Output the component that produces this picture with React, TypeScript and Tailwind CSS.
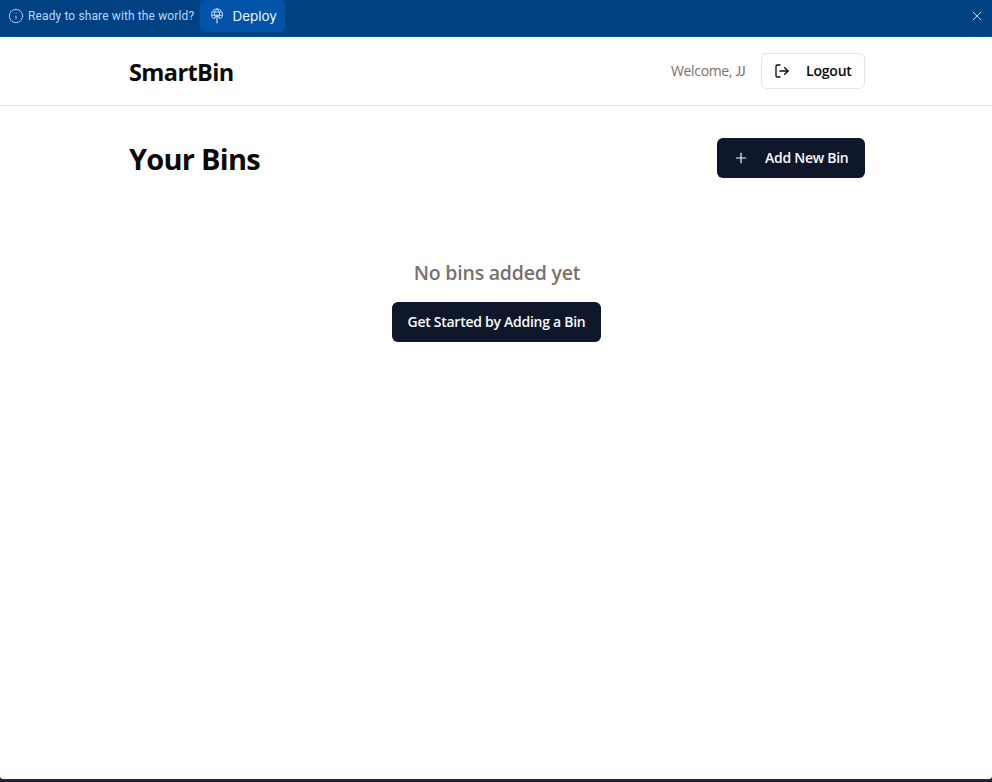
import { Info, LogOut, Plus, X } from "lucide-react";

function DeployIcon() {
  return (
    <svg width="16" height="16" viewBox="0 0 16 16" fill="none" stroke="#c2dcf5" strokeWidth="1" strokeLinecap="round" strokeLinejoin="round">
      <path d="M4.2 10.6A5.6 5.6 0 1 1 11.8 10.6" />
      <path d="M2.5 7.2h11M8 1.2C5.8 2.8 5 5.2 5.5 8M8 1.2C10.2 2.8 11 5.2 10.5 8M3.4 4h9.2" />
      <path d="M8 15V7.6M5 10.4l3-3 3 3" strokeWidth="1.2" />
    </svg>
  );
}

function Banner() {
  return (
    <div className="flex h-[37px] items-start justify-between border-b border-[#0053a6] bg-[#004182]">
      <div className="flex h-8 items-center pl-2">
        <Info size={16} strokeWidth={1.5} className="text-[#a5d0f8]" />
        <span className="ml-1 w-[172px] whitespace-nowrap font-['Roboto',sans-serif] text-[12px] tracking-[0.12px] text-[#b3d9ff]">
          Ready to share with the world?
        </span>
        <button className="flex h-8 w-[85px] items-center rounded bg-[#0053a6] pl-[9px] font-['Inter',sans-serif] text-[13.5px] text-[#f0f6fc]">
          <DeployIcon />
          <span className="ml-[7.5px] tracking-[-0.05px]">Deploy</span>
        </button>
      </div>
      <button className="flex h-8 items-center pr-[7px] text-[#b3d9ff]">
        <X size={16} strokeWidth={1.5} />
      </button>
    </div>
  );
}

export default function App() {
  return (
    <div className="flex h-[782px] flex-col bg-[#23283b] font-['Open_Sans','Noto_Sans',sans-serif] text-[#0c0a09]">
      <Banner />
      <div className="flex-1 rounded-b-[3px] bg-white">
        <header className="h-[69px] border-b border-[#e4e4e7]">
          <div className="mx-auto flex h-[68px] w-[738px] items-center justify-between pl-0.5">
            <h1 className="pt-0.5 text-[23.5px] leading-8 font-bold tracking-[-0.6px]">SmartBin</h1>
            <div className="flex items-center gap-4">
              <span className="whitespace-nowrap text-[14px] leading-5 tracking-[-0.35px] text-[#78716c]">
                Welcome, <span className="font-['Lato',sans-serif] text-[13.5px] tracking-[-0.8px]">JJ</span>
              </span>
              <button className="flex h-9 w-[104px] items-center rounded-md border border-[#e4e4e7] pl-3 text-[14px] font-semibold tracking-[-0.2px]">
                <LogOut size={16} className="mr-4" />
                <span className="-mt-px">Logout</span>
              </button>
            </div>
          </div>
        </header>
        <main className="mx-auto w-[738px] pt-8 pl-0.5">
          <div className="flex h-10 items-center justify-between">
            <h2 className="pt-0.5 text-[29px] leading-9 font-bold tracking-[-0.75px]">Your Bins</h2>
            <button className="flex h-10 w-[148px] items-center rounded-md bg-[#0f172a] pl-4 text-[14px] font-semibold tracking-[-0.27px] whitespace-nowrap text-[#f8fafc]">
              <Plus size={16} strokeWidth={1.75} className="mr-4" />
              <span className="-mt-px">Add New Bin</span>
            </button>
          </div>
          <div className="flex flex-col items-center pt-20">
            <h3 className="mb-[15px] pt-px text-[19.5px] leading-7 font-semibold tracking-[-0.22px] text-[#78716c]">No bins added yet</h3>
            <button className="mr-px h-10 w-[209px] rounded-md bg-[#0f172a] pb-px text-[14px] font-semibold tracking-[-0.27px] whitespace-nowrap text-[#f8fafc]">
              Get Started by Adding a Bin
            </button>
          </div>
        </main>
      </div>
      <div className="h-[3px] border-b border-[#15152d] bg-[#23283b]" />
    </div>
  );
}
